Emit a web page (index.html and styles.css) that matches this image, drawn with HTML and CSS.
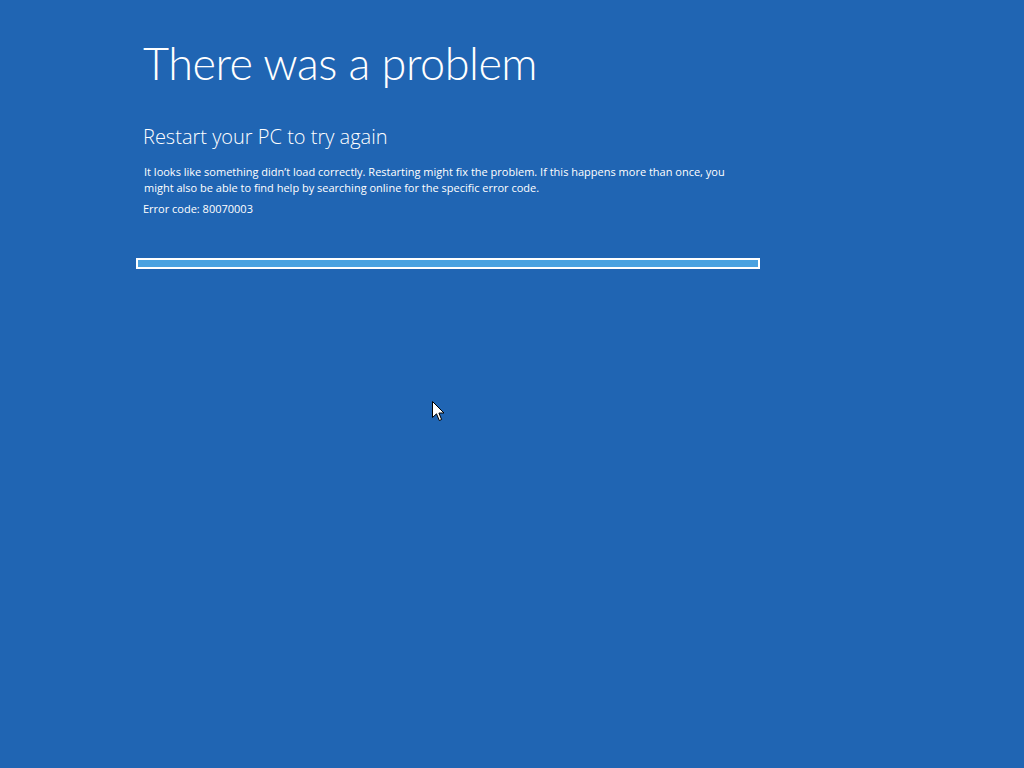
FILE: index.html
```html
<!DOCTYPE html>
<html lang="en">
<head>
<meta charset="utf-8">
<title>There was a problem</title>
<link rel="stylesheet" href="styles.css">
</head>
<body>
<main class="screen">
  <div class="content">
    <h1 class="title">There was a problem</h1>
    <h2 class="subtitle">Restart your PC to try again</h2>
    <p class="message">It looks like something didn’t load correctly. Restarting might fix the problem. If this happens more than once, you might also be able to find help by searching online for the specific error code.</p>
    <p class="code">Error code: 80070003</p>
    <div class="progress"><div class="progress-fill"></div></div>
  </div>
  <svg class="cursor" width="14" height="22" viewBox="0 0 14 22" aria-hidden="true">
    <path d="M0.5 0.5 L0.5 16.5 L4.5 12.8 L7.3 19.5 L9.6 18.5 L6.9 12 L12 12 Z" fill="#fff" stroke="#000" stroke-width="1" stroke-linejoin="miter"/>
  </svg>
</main>
</body>
</html>
```

FILE: styles.css
```css
html, body {
  margin: 0;
  padding: 0;
  height: 100%;
}
body {
  background: #2065b3;
  color: #fff;
  font-family: "Open Sans", "Noto Sans", "Liberation Sans", sans-serif;
}
.screen {
  position: relative;
  width: 1024px;
  height: 768px;
  overflow: hidden;
}
.content {
  padding: 35px 0 0 136px;
  width: 624px;
}
.title {
  margin: 0 0 0 7px;
  font-family: "Lato", "Open Sans", sans-serif;
  font-weight: 300;
  font-size: 45px;
  line-height: 56px;
  letter-spacing: -0.5px;
}
.subtitle {
  margin: 33px 0 0 7px;
  font-weight: 300;
  font-size: 20px;
  line-height: 26px;
  letter-spacing: 0;
}
.message {
  margin: 14px 0 0 8px;
  font-size: 11px;
  line-height: 16px;
  width: 600px;
}
.code {
  margin: 5px 0 0 7px;
  font-size: 11px;
  line-height: 16px;
}
.progress {
  margin-top: 41px;
  width: 620px;
  height: 7px;
  border: 2px solid #fff;
  background: #2065b3;
}
.progress-fill {
  width: 100%;
  height: 100%;
  background: #4aa2e0;
}
.cursor {
  position: absolute;
  left: 432px;
  top: 401px;
}
```
